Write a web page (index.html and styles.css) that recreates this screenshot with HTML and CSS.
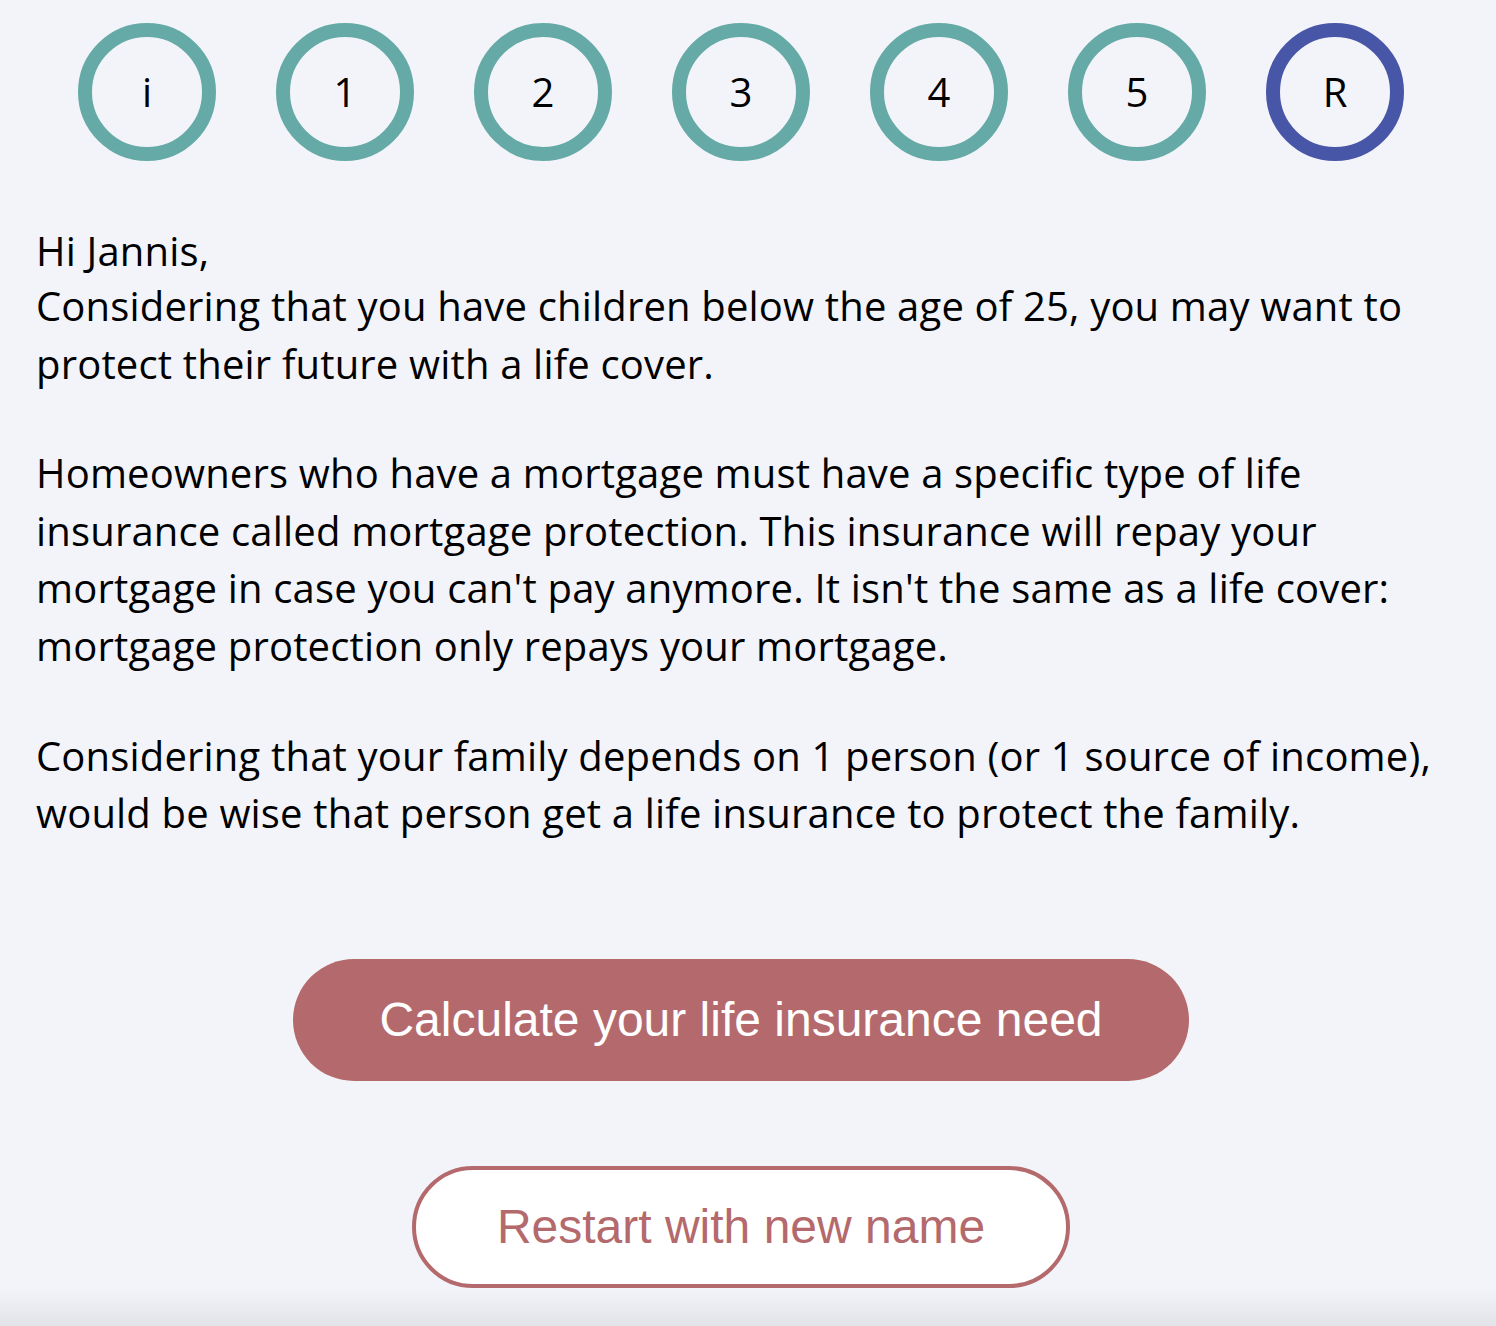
FILE: index.html
```html
<!DOCTYPE html>
<html lang="en">
<head>
<meta charset="utf-8">
<title>Result</title>
<link rel="stylesheet" href="styles.css">
</head>
<body>
<main class="page">
  <nav class="steps">
    <div class="step">i</div>
    <div class="step">1</div>
    <div class="step">2</div>
    <div class="step">3</div>
    <div class="step">4</div>
    <div class="step">5</div>
    <div class="step step-active">R</div>
  </nav>
  <section class="message">
    <div class="greeting">Hi Jannis,</div>
    <p class="para">Considering that you have children below the age of 25, you may want to protect their future with a life cover.</p>
    <p class="para">Homeowners who have a mortgage must have a specific type of life insurance called mortgage protection. This insurance will repay your mortgage in case you can't pay anymore. It isn't the same as a life cover: mortgage protection only repays your mortgage.</p>
    <p class="para">Considering that your family depends on 1 person (or 1 source of income), would be wise that person get a life insurance to protect the family.</p>
  </section>
  <div class="actions">
    <button class="btn btn-primary">Calculate your life insurance need</button>
    <button class="btn btn-outline">Restart with new name</button>
  </div>
</main>
<div class="bottom-fade"></div>
</body>
</html>
```
FILE: styles.css
```css
html, body {
  margin: 0;
  padding: 0;
  background: #f3f4f9;
}
body {
  font-family: "Open Sans", "Noto Sans", sans-serif;
  color: #000;
  height: 1326px;
  overflow: hidden;
}
.page {
  width: 1482px;
}
.steps {
  display: flex;
  justify-content: space-between;
  padding: 23px 78px 0;
}
.step {
  width: 110px;
  height: 110px;
  border: 14px solid #65aaa6;
  border-radius: 50%;
  display: flex;
  align-items: center;
  justify-content: center;
  font-size: 40px;
  line-height: 1;
}
.step-active {
  border-color: #4756a7;
}
.message {
  padding: 64px 37px 0 36px;
  font-size: 40px;
  letter-spacing: 0.17px;
}
.greeting {
  line-height: 52px;
}
.para {
  margin: 0 0 52px;
  line-height: 57.6px;
}
.para:last-child {
  margin-bottom: 0;
}
.actions {
  display: flex;
  flex-direction: column;
  align-items: center;
  gap: 85px;
  padding-top: 117px;
}
.btn {
  font-family: "Liberation Sans", Arial, sans-serif;
  font-size: 48px;
  line-height: 58px;
  border-radius: 61px;
  cursor: pointer;
}
.btn-primary {
  background: #b46a6c;
  color: #fff;
  border: none;
  padding: 32px 86px;
}
.btn-outline {
  background: #fff;
  color: #b46a6c;
  border: 4px solid #b46a6c;
  padding: 28px 81px;
}
.bottom-fade {
  position: fixed;
  left: 0;
  right: 0;
  bottom: 0;
  height: 38px;
  background: linear-gradient(to bottom, rgba(230, 231, 236, 0), rgba(226, 227, 232, 1));
  pointer-events: none;
}
```
